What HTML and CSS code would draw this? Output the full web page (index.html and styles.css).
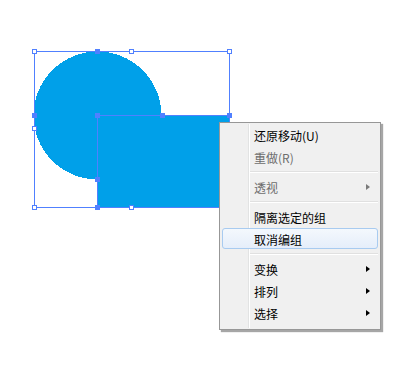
FILE: index.html
```html
<!DOCTYPE html>
<html>
<head>
<meta charset="utf-8">
<link rel="stylesheet" href="styles.css">
</head>
<body>
<div class="stage">
  <svg class="art" width="409" height="373" viewBox="0 0 409 373" shape-rendering="crispEdges">
    <circle cx="97.5" cy="115.5" r="64" fill="#00a0e9"/>
    <rect x="97.5" y="115.5" width="132" height="92" fill="#00a0e9" stroke="#5080ff" stroke-width="1"/>
    <rect x="34.5" y="51.5" width="195" height="156" fill="none" stroke="#5080ff" stroke-width="1"/>
    <g fill="#fff" stroke="#5080ff" stroke-width="1">
      <rect x="32.5" y="49.5" width="4" height="4"/>
      <rect x="129.5" y="49.5" width="4" height="4"/>
      <rect x="227.5" y="49.5" width="4" height="4"/>
      <rect x="32.5" y="126.5" width="4" height="4"/>
      <rect x="32.5" y="205.5" width="4" height="4"/>
      <rect x="129.5" y="205.5" width="4" height="4"/>
    </g>
    <g fill="#5080ff">
      <rect x="95" y="49" width="5" height="5"/>
      <rect x="32" y="113" width="5" height="5"/>
      <rect x="95" y="113" width="5" height="5"/>
      <rect x="160" y="113" width="5" height="5"/>
      <rect x="227" y="113" width="5" height="5"/>
      <rect x="95" y="177" width="5" height="5"/>
      <rect x="95" y="205" width="5" height="5"/>
    </g>
  </svg>

  <div class="menu">
    <div class="gutter"></div>
    <div class="item"><span class="label">还原移动(U)</span></div>
    <div class="item disabled"><span class="label">重做(R)</span></div>
    <div class="sep"></div>
    <div class="item disabled"><span class="label">透视</span><span class="arrow"></span></div>
    <div class="sep"></div>
    <div class="item"><span class="label">隔离选定的组</span></div>
    <div class="item hover"><span class="label">取消编组</span></div>
    <div class="sep"></div>
    <div class="item"><span class="label">变换</span><span class="arrow"></span></div>
    <div class="item"><span class="label">排列</span><span class="arrow"></span></div>
    <div class="item"><span class="label">选择</span><span class="arrow"></span></div>
  </div>
</div>
</body>
</html>
```

FILE: styles.css
```css
html, body {
  margin: 0;
  padding: 0;
  background: #ffffff;
}

.stage {
  position: relative;
  width: 409px;
  height: 373px;
  overflow: hidden;
  font-family: "Noto Sans CJK SC", "Noto Sans", sans-serif;
}

.art {
  position: absolute;
  left: 0;
  top: 0;
  display: block;
}

.menu {
  position: absolute;
  left: 219px;
  top: 122px;
  width: 160px;
  padding: 1px 0 5px 0;
  background: #f0f0f0;
  border: 1px solid #979797;
  box-shadow: 2px 2px 1px rgba(0, 0, 0, 0.35);
  display: flex;
  flex-direction: column;
}

.gutter {
  position: absolute;
  left: 28px;
  top: 1px;
  bottom: 1px;
  width: 1px;
  background: #e2e3e3;
  border-right: 1px solid #ffffff;
}

.item {
  position: relative;
  height: 22px;
  display: flex;
  align-items: center;
  padding-left: 34px;
  padding-right: 10px;
  font-size: 12px;
  line-height: 22px;
  color: #000000;
  box-sizing: border-box;
}

.item .label {
  flex: 1;
  position: relative;
  top: 1px;
}

.item.disabled {
  color: #6d6d6d;
}

.item.hover::before {
  content: "";
  position: absolute;
  left: 2px;
  right: 2px;
  top: 0;
  bottom: 1px;
  border: 1px solid #a8cbf0;
  border-radius: 3px;
  background: linear-gradient(#f4f8fd, #e5eefa);
}

.arrow {
  width: 0;
  height: 0;
  border-top: 3.5px solid transparent;
  border-bottom: 3.5px solid transparent;
  border-left: 4px solid #000000;
}

.item.disabled .arrow {
  border-left-color: #7a7a7a;
}

.sep {
  height: 8px;
  margin-left: 30px;
  margin-right: 2px;
  position: relative;
}

.sep::after {
  content: "";
  position: absolute;
  left: 0;
  right: 0;
  top: 3px;
  height: 1px;
  background: #e0e0e0;
  border-bottom: 1px solid #ffffff;
}
```
